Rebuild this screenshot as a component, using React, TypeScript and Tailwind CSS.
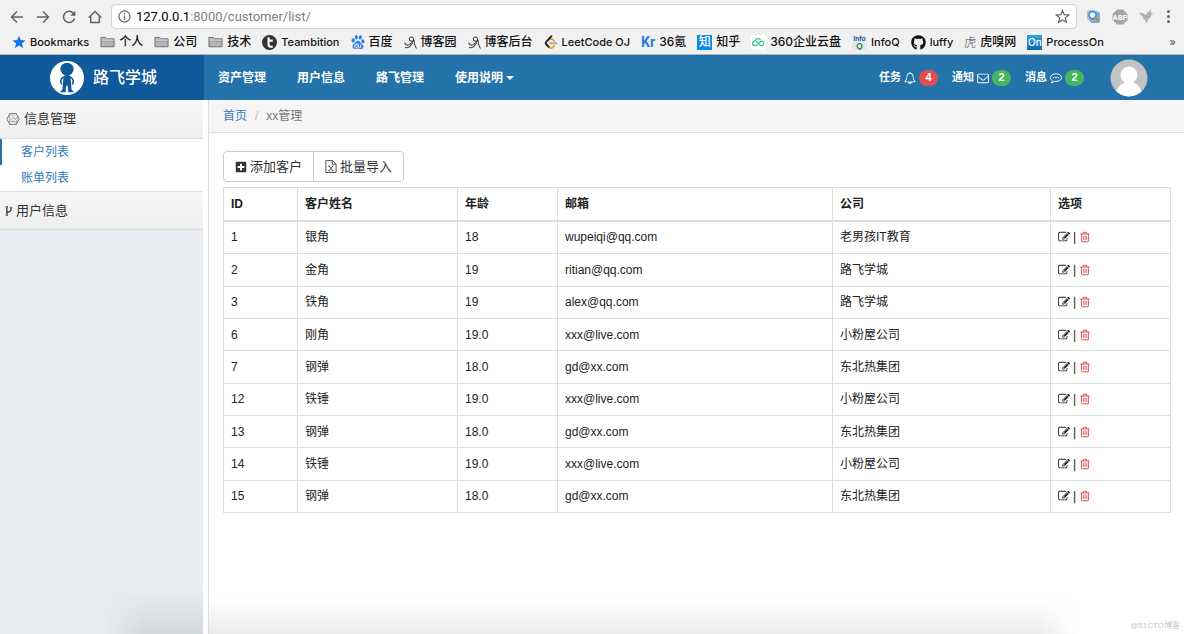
import type { ReactNode } from "react";
import { FaConnectdevelop, FaGithub, FaPlusSquare } from "react-icons/fa";
import { SiBaidu } from "react-icons/si";
import clsx from "clsx";

type Customer = {
  id: number;
  name: string;
  age: string;
  email: string;
  company: string;
};

const customers: Customer[] = [
  { id: 1, name: "银角", age: "18", email: "wupeiqi@qq.com", company: "老男孩IT教育" },
  { id: 2, name: "金角", age: "19", email: "ritian@qq.com", company: "路飞学城" },
  { id: 3, name: "铁角", age: "19", email: "alex@qq.com", company: "路飞学城" },
  { id: 6, name: "刚角", age: "19.0", email: "xxx@live.com", company: "小粉屋公司" },
  { id: 7, name: "钢弹", age: "18.0", email: "gd@xx.com", company: "东北热集团" },
  { id: 12, name: "铁锤", age: "19.0", email: "xxx@live.com", company: "小粉屋公司" },
  { id: 13, name: "钢弹", age: "18.0", email: "gd@xx.com", company: "东北热集团" },
  { id: 14, name: "铁锤", age: "19.0", email: "xxx@live.com", company: "小粉屋公司" },
  { id: 15, name: "钢弹", age: "18.0", email: "gd@xx.com", company: "东北热集团" },
];

// Glyphs on the 1792 unit grid of the classic icon font
const glyphs = {
  edit: "M888 1184l116-116-152-152-116 116v56h96v96h56zm440-720q-16-16-33 1l-350 350q-17 17-1 33t33-1l350-350q17-17 1-33zm80 594v190q0 119-84.5 203.5t-203.5 84.5h-832q-119 0-203.5-84.5t-84.5-203.5v-832q0-119 84.5-203.5t203.5-84.5h832q63 0 117 25 15 7 18 23 3 17-9 29l-49 49q-14 14-32 8-23-6-45-6h-832q-66 0-113 47t-47 113v832q0 66 47 113t113 47h832q66 0 113-47t47-113v-126q0-13 9-22l64-64q15-15 35-7t20 29zm-96-738l288 288-672 672h-288v-288zm444 132l-92 92-288-288 92-92q28-28 68-28t68 28l152 152q28 28 28 68t-28 68z",
  trash:
    "M704 736v576q0 14-9 23t-23 9h-64q-14 0-23-9t-9-23v-576q0-14 9-23t23-9h64q14 0 23 9t9 23zm256 0v576q0 14-9 23t-23 9h-64q-14 0-23-9t-9-23v-576q0-14 9-23t23-9h64q14 0 23 9t9 23zm256 0v576q0 14-9 23t-23 9h-64q-14 0-23-9t-9-23v-576q0-14 9-23t23-9h64q14 0 23 9t9 23zm128 724v-948h-896v948q0 22 7 40.5t14.5 27 10.5 8.5h832q3 0 10.5-8.5t14.5-27 7-40.5zm-672-1076h448l-48-117q-7-9-17-11h-317q-10 2-17 11zm928 32v64q0 14-9 23t-23 9h-96v948q0 83-47 143.5t-113 60.5h-832q-66 0-113-58.5t-47-141.5v-952h-96q-14 0-23-9t-9-23v-64q0-14 9-23t23-9h309l70-167q15-37 54-63t79-26h320q40 0 79 26t54 63l70 167h309q14 0 23 9t9 23z",
  bell: "M912 1696q0-16-16-16-59 0-101.5-42.5t-42.5-101.5q0-16-16-16t-16 16q0 73 51.5 124.5t124.5 51.5q16 0 16-16zm-666-288h1300q-266-300-266-832 0-51-24-105t-69-103-121.5-80.5-169.5-31.5-169.5 31.5-121.5 80.5-69 103-24 105q0 532-266 832zm1482 0q0 52-38 90t-90 38h-448q0 106-75 181t-181 75-181-75-75-181h-448q-52 0-90-38t-38-90q50-42 91-88t85-119.5 74.5-158.5 50-206 19.5-260q0-152 117-282.5t307-158.5q-8-19-8-39 0-40 28-68t68-28 68 28 28 68q0 20-8 39 190 28 307 158.5t117 282.5q0 139 19.5 260t50 206 74.5 158.5 85 119.5 91 88z",
  fork: "M672 1472q0-40-28-68t-68-28-68 28-28 68 28 68 68 28 68-28 28-68zm0-1152q0-40-28-68t-68-28-68 28-28 68 28 68 68 28 68-28 28-68zm640 128q0-40-28-68t-68-28-68 28-28 68 28 68 68 28 68-28 28-68zm96 0q0 52-26 96.5t-70 69.5q-2 287-226 414-67 38-203 81-128 40-169.5 71t-41.5 100v26q44 25 70 69.5t26 96.5q0 80-56 136t-136 56-136-56-56-136q0-52 26-96.5t70-69.5v-820q-44-25-70-69.5t-26-96.5q0-80 56-136t136-56 136 56 56 136q0 52-26 96.5t-70 69.5v497q54-26 154-57 55-17 87.5-29.5t70.5-31 59-39.5 40.5-51 28-69.5 8.5-91.5q-44-25-70-69.5t-26-96.5q0-80 56-136t136-56 136 56 56 136z",
  envelope:
    "M1664 1504v-768q-32 36-69 66-268 206-426 338-51 43-83 67t-86.5 48.5-102.5 24.5h-2q-48 0-102.5-24.5t-86.5-48.5-83-67q-158-132-426-338-37-30-69-66v768q0 13 9.5 22.5t22.5 9.5h1472q13 0 22.5-9.5t9.5-22.5zm0-1051v-24.5l-.5-13-3-12.5-5.5-9-9-7.5-14-2.5h-1472q-13 0-22.5 9.5t-9.5 22.5q0 168 147 284 193 152 401 317 6 5 35 29.5t46 37.5 44.5 31.5 50.5 27.5 43 9h2q20 0 43-9t50.5-27.5 44.5-31.5 46-37.5 35-29.5q208-165 401-317 54-43 100.5-115.5t46.5-131.5zm128-37v1088q0 66-47 113t-113 47h-1472q-66 0-113-47t-47-113v-1088q0-66 47-113t113-47h1472q66 0 113 47t47 113z",
};

function Glyph({ name, className }: { name: keyof typeof glyphs; className?: string }) {
  return (
    <svg viewBox="0 0 1792 1792" fill="currentColor" className={clsx("shrink-0", className)} aria-hidden="true">
      <path d={glyphs[name]} />
    </svg>
  );
}

function CommentIcon() {
  return (
    <svg viewBox="0 0 24 24" className="size-3 shrink-0" fill="none" stroke="currentColor" strokeWidth="1.8" aria-hidden="true">
      <path d="M12 3.5c6.2 0 11 3.3 11 7.7s-4.8 7.7-11 7.7c-1 0-2-.1-2.9-.3C7.3 20.3 5 21.4 2.8 21.7c1.2-1.2 1.9-2.6 2.2-4.2-2.5-1.5-4-3.7-4-6.3 0-4.4 4.8-7.7 11-7.7z" />
      <g fill="currentColor" stroke="none">
        <circle cx="7" cy="11.2" r="1.7" />
        <circle cx="12" cy="11.2" r="1.7" />
        <circle cx="17" cy="11.2" r="1.7" />
      </g>
    </svg>
  );
}

function ExcelIcon() {
  return (
    <svg viewBox="0 0 12 14" className="h-[13px] w-3 shrink-0" fill="none" stroke="currentColor" strokeWidth=".9" aria-hidden="true">
      <path d="M1 .5h6.5l4 4v9H.5V.5zM7.500.5v4h4" />
      <path d="m3.800 6.500 4 5M8 6.500l-4 5" />
      <path d="M3 6.500h1.800M7 6.500h1.800M3 11.500h1.800M7 11.500h1.800" strokeWidth=".8" />
    </svg>
  );
}

function FolderIcon() {
  return (
    <svg viewBox="0 0 16 13" className="w-[15px] shrink-0" aria-hidden="true">
      <path d="M1 11.500V1.500h5l1.500 1.500H15v8.500z" fill="#b4b4b4" stroke="#707070" />
      <path d="M1.500 4.500h13" stroke="#e4e4e4" />
      <path d="M1 5.500h14" stroke="#8a8a8a" strokeWidth=".6" />
    </svg>
  );
}

function CnblogsIcon() {
  return (
    <svg viewBox="0 0 14 14" className="size-[13px] shrink-0" fill="none" stroke="#444" strokeLinecap="round" aria-hidden="true">
      <path d="M.8 7.500c.8 2.600 3.400 3 5.600 1.300C9 7 11.200 4.300 10 2.200 8.800.2 5.700 1 5.700 3.400c0 2.200 3.200 2.700 4.900 1.300" strokeWidth="1.200" />
      <path d="M10.600 4.700c.4 2.600.8 5.600 2.600 8.500M1.500 12.500c2.200.6 5-.7 7.500-4.500" strokeWidth="1.100" />
    </svg>
  );
}

function Bookmark({ icon, label }: { icon: ReactNode; label: string }) {
  const hasHan = /[\u4e00-\u9fff]/.test(label);
  return (
    <a href="#" className={clsx("flex shrink-0 items-center gap-1", hasHan ? "text-xs" : "text-[11px]")}>
      {icon}
      {label}
    </a>
  );
}

function BrowserBar() {
  return (
    <div className="h-[55px] border-b border-[#a9b4bd] bg-[#f1f1f1]">
      <div className="flex h-[33px] items-center pr-2.5 pl-[9px] text-[#5f6368]">
        <div className="flex gap-[10px]">
          <button aria-label="Back">
            <svg viewBox="0 0 16 16" className="size-4" fill="none" stroke="currentColor" strokeWidth="1.500">
              <path d="M14 8H3M8 2.500 2.500 8 8 13.500" />
            </svg>
          </button>
          <button aria-label="Forward">
            <svg viewBox="0 0 16 16" className="size-4" fill="none" stroke="currentColor" strokeWidth="1.500">
              <path d="M2 8h11M8 2.500 13.500 8 8 13.500" />
            </svg>
          </button>
          <button aria-label="Reload">
            <svg viewBox="0 0 16 16" className="size-4" fill="none" stroke="currentColor" strokeWidth="1.500">
              <path d="M13.500 9.500A5.600 5.600 0 1 1 12.300 4.200L14 6" />
              <path d="M14.300 1.800v5h-5z" fill="currentColor" stroke="none" />
            </svg>
          </button>
          <button aria-label="Home">
            <svg viewBox="0 0 16 16" className="size-4" fill="none" stroke="currentColor" strokeWidth="1.500">
              <path d="M1.700 8.500 8 2.500l6.300 6M3.700 7.500v6h8.600v-6" />
            </svg>
          </button>
        </div>
        <div className="ml-2 flex h-[25px] flex-1 items-center rounded-sm border border-[#d3d3d3] bg-white px-1.5">
          <svg viewBox="0 0 14 14" className="size-[13px] shrink-0" fill="none" stroke="currentColor" strokeWidth="1.300" aria-hidden="true">
            <circle cx="7" cy="7" r="6" />
            <path d="M7 6v4.500M7 3.300v1.500" />
          </svg>
          <span className="ml-[5px] flex-1 font-[Roboto,sans-serif] text-[13px] text-[#808080]">
            <span className="text-black">127.0.0.1</span>:8000/customer/list/
          </span>
          <button aria-label="Bookmark this page">
            <svg viewBox="0 0 16 16" className="size-[15px]" fill="none" stroke="currentColor" strokeWidth="1.300">
              <path d="m8 1.600 1.800 4.400 4.800.4-3.600 3.100 1.100 4.700L8 11.700l-4.100 2.500L5 9.500 1.400 6.400 6.200 6z" />
            </svg>
          </button>
        </div>
        <div className="ml-[9px] flex items-center gap-[11px]">
          <svg viewBox="0 0 16 16" className="size-[15px]" aria-hidden="true">
            <rect x="1" y="1" width="11" height="11" rx="2.500" fill="#9cc4ef" />
            <rect x="4" y="3" width="11" height="12" rx="3" fill="#7daee6" />
            <circle cx="7" cy="6.500" r="3.700" fill="#e8f5ff" stroke="#3e78bd" strokeWidth="1.300" />
            <path d="m9.500 9 3.700 4" stroke="#c58b36" strokeWidth="2.200" strokeLinecap="round" />
          </svg>
          <svg viewBox="0 0 16 16" className="size-4" aria-hidden="true">
            <path d="M5 .5h6L15.500 5v6L11 15.500H5L.5 11V5z" fill="#a5a5a5" />
            <text x="8" y="10.500" textAnchor="middle" fontSize="7" fontWeight="700" fill="#fff" fontFamily="Liberation Sans, sans-serif">
              ABP
            </text>
          </svg>
          <svg viewBox="0 0 16 16" className="size-[15px]" fill="#b2b2b2" aria-hidden="true">
            <path d="M0 4c3.200-.2 5.800.8 7.500 2.500C8.500 4 10 2 13 .5c-.5 1.500-.4 2.500-.2 3.700L15.500 5l-2.300 1.200c-.2 2.500-1.700 4-3.700 4.800.2 1.500-.2 3-1.500 4.500-.5-2-1.200-3.500-2.500-4.700L3.500 10.500 5 9C3.500 8 1.500 6.500 0 4z" />
          </svg>
          <button aria-label="Menu" className="ml-[-3px] flex w-3 flex-col items-center gap-0.5">
            <span className="size-[3px] rounded-full bg-[#5f6368]" />
            <span className="size-[3px] rounded-full bg-[#5f6368]" />
            <span className="size-[3px] rounded-full bg-[#5f6368]" />
          </button>
        </div>
      </div>
      <nav
        aria-label="Bookmarks"
        className="flex h-[18px] items-center gap-[11px] overflow-hidden pr-2 pl-3 font-[Inter,'Noto_Sans_CJK_SC',sans-serif] text-[11px] leading-4 font-medium whitespace-nowrap text-[#111]"
      >
        <Bookmark
          label="Bookmarks"
          icon={
            <svg viewBox="0 0 16 16" className="size-3.5" fill="#1a73e8" aria-hidden="true">
              <path d="m8 .8 2.100 5 5.400.4-4.100 3.500 1.300 5.300L8 12.100 3.300 15l1.300-5.300L.5 6.200l5.400-.4z" />
            </svg>
          }
        />
        <Bookmark icon={<FolderIcon />} label="个人" />
        <Bookmark icon={<FolderIcon />} label="公司" />
        <Bookmark icon={<FolderIcon />} label="技术" />
        <Bookmark
          label="Teambition"
          icon={
            <svg viewBox="0 0 16 16" className="size-[15px]" aria-hidden="true">
              <circle cx="8" cy="8" r="8" fill="#333" />
              <path d="M7 2.500v7.500q0 2.500 2.500 2.500h2M7 6h4.500" fill="none" stroke="#fff" strokeWidth="2.200" />
            </svg>
          }
        />
        <Bookmark icon={<SiBaidu className="size-3.5 text-[#2b7de9]" />} label="百度" />
        <Bookmark icon={<CnblogsIcon />} label="博客园" />
        <Bookmark icon={<CnblogsIcon />} label="博客后台" />
        <Bookmark
          label="LeetCode OJ"
          icon={
            <svg viewBox="0 0 14 16" className="h-[15px] w-3.5" fill="none" strokeWidth="2" strokeLinecap="round" aria-hidden="true">
              <path d="M4.500 5q2.500-2 4.500 0l1.200 1.200M2 9.900 5 13q2 1.800 4 0l1.500-1.500" stroke="#f5a21c" />
              <path d="M7.500 1.300 2 7.200q-1.200 1.400 0 2.700l2.500 2.700" stroke="#222" />
              <path d="M6 8.800h7" stroke="#aaa" />
            </svg>
          }
        />
        <Bookmark
          label="36氪"
          icon={<span className="font-[Roboto,sans-serif] text-sm font-bold text-[#2c7be5]">Kr</span>}
        />
        <Bookmark
          label="知乎"
          icon={<span className="flex size-[15px] items-center justify-center bg-[#0f88eb] text-xs text-white">知</span>}
        />
        <Bookmark
          label="360企业云盘"
          icon={
            <svg viewBox="0 0 16 16" className="size-[15px]" aria-hidden="true">
              <rect width="16" height="16" rx="3" fill="#fff" />
              <path
                d="M4.500 11.300h-.3a2.500 2.500 0 0 1 0-5c2.800 0 3.600 5 7 5a2.300 2.300 0 1 0-.8-4.400L8.300 9.200M4.300 6.200a3.300 3.300 0 0 1 6.200-.3M4.500 11.300c1.200 0 2-.6 2.700-1.400"
                fill="none"
                stroke="#32c787"
                strokeWidth="1.200"
              />
            </svg>
          }
        />
        <Bookmark
          label="InfoQ"
          icon={
            <svg viewBox="0 0 16 16" className="size-[15px]" fontFamily="Liberation Sans, sans-serif" fontWeight="700" aria-hidden="true">
              <rect width="16" height="16" fill="#e3e9ee" />
              <text x="8" y="6.500" fontSize="7" textAnchor="middle" fill="#17599b">
                Info
              </text>
              <text x="8" y="14.500" fontSize="9" textAnchor="middle" fill="#1b8740">
                Q
              </text>
            </svg>
          }
        />
        <Bookmark icon={<FaGithub className="size-[15px] text-[#111]" />} label="luffy" />
        <Bookmark
          label="虎嗅网"
          icon={<span className="font-['Noto_Sans_CJK_SC',sans-serif] text-xs font-light text-[#444]">虎</span>}
        />
        <Bookmark
          label="ProcessOn"
          icon={
            <span className="flex size-[15px] items-center justify-center bg-linear-to-b from-[#2fa6dc] to-[#1366a8] text-[10px] text-white">
              On
            </span>
          }
        />
        <button aria-label="More bookmarks" className="ml-auto text-[#666]">
          »
        </button>
      </nav>
    </div>
  );
}

function Notice({ label, icon, count, urgent }: { label: string; icon: ReactNode; count: number; urgent?: boolean }) {
  return (
    <a href="#" className="flex items-center gap-[3px]">
      <span>{label}</span>
      {icon}
      <span
        className={clsx(
          "flex h-4 w-[19px] items-center justify-center rounded-full",
          urgent ? "bg-[#e04f4f]" : "bg-[#45b560]",
        )}
      >
        {count}
      </span>
    </a>
  );
}

function Header() {
  return (
    <header className="flex h-[45px] bg-[#2373aa] text-xs font-bold text-white">
      <a href="#" className="flex w-[204px] shrink-0 items-center gap-[9px] bg-[#10599b] pl-[50px] text-base font-medium">
        <svg viewBox="0 0 36 36" className="size-[34px]" aria-hidden="true">
          <circle cx="18" cy="18" r="18" fill="#fff" />
          <g fill="#10599b">
            <ellipse cx="18" cy="8.600" rx="7" ry="6.800" />
            <path d="M14.500 12h7l-1.500 4.500h-4z" />
            <path d="M14.500 16h7l1 9.500.2 4.500 2.700 3h-6.300l.2-3L18.500 26h-1l-.9 4 .2 3h-6.300l2.700-3 .3-4.500z" />
          </g>
          <path d="M15.500 17c-2.800.5-4 2.500-4.200 4.700l.8 2.500M20.500 17c2.800.5 4 2.500 4.200 4.700l-.8 2.500" fill="none" stroke="#10599b" strokeWidth="1.700" strokeLinecap="round" />
        </svg>
        路飞学城
      </a>
      <nav className="flex items-center gap-[31px] pl-[14px]">
        <a href="#">资产管理</a>
        <a href="#">用户信息</a>
        <a href="#">路飞管理</a>
        <a href="#" className="flex items-center gap-[3px]">
          使用说明
          <svg viewBox="0 0 8 4" className="w-2" fill="currentColor" aria-hidden="true">
            <path d="M0 0h8L4 4z" />
          </svg>
        </a>
      </nav>
      <div className="ml-auto flex items-center gap-[14px] pr-9 text-[11px]">
        <Notice label="任务" icon={<Glyph name="bell" className="size-3" />} count={4} urgent />
        <Notice label="通知" icon={<Glyph name="envelope" className="size-3" />} count={2} />
        <Notice label="消息" icon={<CommentIcon />} count={2} />
        <a href="#" aria-label="Account" className="ml-3">
          <svg viewBox="0 0 38 38" className="size-[38px]" aria-hidden="true">
            <clipPath id="avatar">
              <circle cx="19" cy="19" r="18.500" />
            </clipPath>
            <g clipPath="url(#avatar)">
              <path d="M0 0h38v38H0z" fill="#c3c3c3" />
              <circle cx="19" cy="16" r="8.500" fill="#fff" />
              <path d="M14 21h10v3c4.500 1.500 8 6 8.500 15h-27c.5-9 4-13.500 8.500-15z" fill="#fff" />
            </g>
          </svg>
        </a>
      </div>
    </header>
  );
}

function Sidebar() {
  return (
    <aside className="w-[203px] shrink-0 bg-[#e9edf2] bg-[linear-gradient(to_right,#e9edf2_50%,transparent_72%),linear-gradient(to_top,#d3d8dc,#e9edf2_45px)] text-xs">
      <h2 className="flex h-[39px] items-center gap-1 border-b border-[#dcdcdc] bg-linear-to-b from-[#f8f8f8] to-[#eeeeee] pl-1.5 text-[13px] text-[#333]">
        <FaConnectdevelop className="size-[14px] text-[#333]" />
        信息管理
      </h2>
      <nav className="border-b border-[#dcdcdc] bg-white leading-[26px] text-[#337ab7]">
        <a href="#" className="block border-l-2 border-[#2373aa] pl-[19px]">
          客户列表
        </a>
        <a href="#" className="block border-l-2 border-transparent pl-[19px]">
          账单列表
        </a>
      </nav>
      <h2 className="flex h-[38px] items-center gap-px border-b border-[#dcdcdc] bg-linear-to-b from-[#f8f8f8] to-[#eeeeee] pl-[3px] text-[13px] text-[#333]">
        <Glyph name="fork" className="size-3" />
        用户信息
      </h2>
    </aside>
  );
}

function CustomerTable() {
  return (
    <table className="mt-[5px] h-[326px] w-full table-fixed border-collapse border border-[#ddd] text-left text-xs text-[#222]">
      <thead>
        <tr className="h-[33px] border-b-2 border-[#ddd]">
          <th className="w-[74px] border-x border-[#ddd] px-[7px]">ID</th>
          <th className="w-[160px] border-x border-[#ddd] px-[7px]">客户姓名</th>
          <th className="w-[100px] border-x border-[#ddd] px-[7px]">年龄</th>
          <th className="w-[275px] border-x border-[#ddd] px-[7px]">邮箱</th>
          <th className="w-[218px] border-x border-[#ddd] px-[7px]">公司</th>
          <th className="w-[120px] border-x border-[#ddd] px-[7px]">选项</th>
        </tr>
      </thead>
      <tbody>
        {customers.map((customer) => (
          <tr key={customer.id}>
            <td className="border border-[#ddd] px-[7px]">{customer.id}</td>
            <td className="border border-[#ddd] px-[7px]">{customer.name}</td>
            <td className="border border-[#ddd] px-[7px]">{customer.age}</td>
            <td className="border border-[#ddd] px-[7px]">{customer.email}</td>
            <td className="border border-[#ddd] px-[7px]">{customer.company}</td>
            <td className="border border-[#ddd] px-[7px]">
              <div className="flex items-center gap-[3px]">
                <a href="#" aria-label="Edit">
                  <Glyph name="edit" className="size-3" />
                </a>
                <span>|</span>
                <a href="#" aria-label="Delete" className="text-[#e04f4f]">
                  <Glyph name="trash" className="size-3" />
                </a>
              </div>
            </td>
          </tr>
        ))}
      </tbody>
    </table>
  );
}

export default function App() {
  return (
    <div className="flex min-h-screen flex-col bg-white font-['Liberation_Sans','Noto_Sans_CJK_SC',sans-serif]">
      <BrowserBar />
      <Header />
      <div className="flex flex-1">
        <Sidebar />
        <main className="ml-[5px] flex min-w-0 flex-1 flex-col border-l border-[#ddd] bg-[linear-gradient(to_right,transparent_85%,white_89%),linear-gradient(to_top,#ececec,white_36px)]">
          <nav aria-label="Breadcrumb" className="flex h-[33px] items-center gap-2 border-b border-[#ddd] bg-[#f5f5f5] px-[14px] pb-px text-xs">
            <a href="#" className="text-[#337ab7]">
              首页
            </a>
            <span className="text-[#bbb]">/</span>
            <span className="text-[#777]">xx管理</span>
          </nav>
          <div className="px-[14px] pt-[18px]">
            <div className="flex text-[13px] text-[#333]">
              <button className="flex h-[31px] items-center gap-[3px] rounded-l-sm border border-[#ccc] bg-white px-[11px]">
                <FaPlusSquare className="size-3" />
                添加客户
              </button>
              <button className="-ml-px flex h-[31px] items-center gap-[3px] rounded-r-sm border border-[#ccc] bg-white px-[11px]">
                <ExcelIcon />
                批量导入
              </button>
            </div>
            <CustomerTable />
          </div>
          <footer className="mt-auto pr-1 pb-0.5 text-right text-[8px] text-[#c8c8c8]">@51CTO博客</footer>
        </main>
      </div>
    </div>
  );
}
